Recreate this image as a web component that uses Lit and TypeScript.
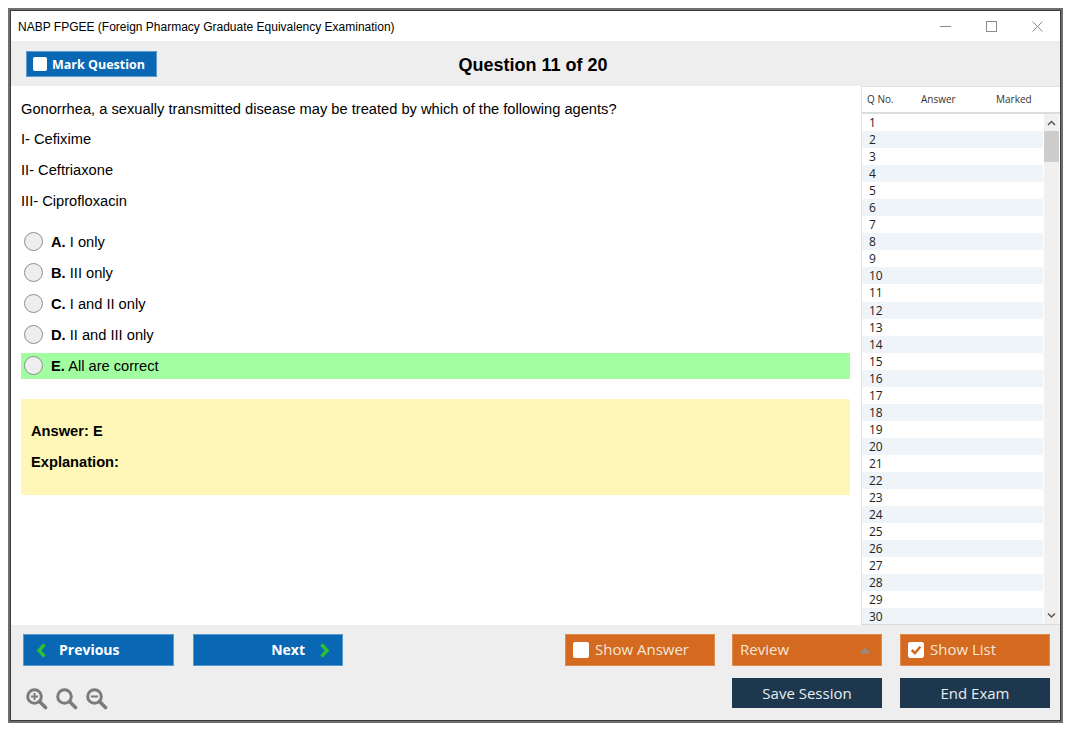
import { LitElement, html, css, svg } from "lit";
import { customElement } from "lit/decorators.js";

@customElement("app-root")
export class AppRoot extends LitElement {
  static styles = css`
    :host { display: block; padding: 8px 12px 0 8px; width: 1055px; font-family: "Liberation Sans", Arial, sans-serif; color: #000; }
    .win { width: 1055px; height: 715px; box-sizing: border-box; border: 2px solid #6f6f6f; background: #fff; display: flex; flex-direction: column; box-shadow: inset 0 0 0 1px #3a3a3a; padding: 1px; }
    .title { height: 30px; flex: none; display: flex; align-items: center; padding-left: 7px; font-size: 12px; }
    .title span { flex: 1; padding-top: 1px; }
    .ctl { width: 46px; height: 29px; display: flex; align-items: center; justify-content: center; }
    .ctl svg { display: block; }
    .tool { height: 45px; flex: none; background: #eeeeee; display: flex; align-items: center; padding-left: 15px; position: relative; }
    .mark { width: 131px; height: 26px; box-sizing: border-box; background: #0a67b3; border: 1px solid #5b9bd0; color: #fff; display: flex; align-items: center; padding-left: 6px; gap: 5px; font: 700 12.5px "Open Sans", sans-serif; }
    .mark span { padding-top: 1px; }
    .box { width: 14px; height: 14px; background: #fff; border-radius: 2px; flex: none; display: block; }
    .qtitle { position: absolute; left: 0; right: 5px; top: 14px; text-align: center; font-size: 18px; line-height: 20px; font-weight: 700; pointer-events: none; }
    .main { flex: 1; display: flex; min-height: 0; }
    .content { width: 850px; box-sizing: border-box; padding: 13px 11px 0 10px; font-size: 14.67px; flex: none; }
    .line { height: 31px; line-height: 20px; box-sizing: border-box; }
    .line.first { height: 30px; }
    .opts { margin-top: 7px; }
    .opt { height: 26px; margin-bottom: 5px; display: flex; align-items: center; padding-left: 3px; gap: 8px; }
    .opt.ok { background: #a1ffa1; }
    .radio { width: 17px; height: 17px; border-radius: 50%; background: #eeeeee; border: 1px solid #8e8e8e; flex: none; margin-top: -1px; }
    .ans { margin-top: 20px; height: 96px; box-sizing: border-box; background: #fef7b8; padding: 22px 10px 0; font-weight: 700; }
    .list { flex: 1; display: flex; flex-direction: column; overflow: hidden; border-left: 1px solid #e2e2e2; border-top: 1px solid #e2e2e2; border-bottom: 1px solid #dcdcdc; font-family: "Open Sans", sans-serif; min-width: 0; }
    .head { flex: none; border-bottom: 2px solid #dcdcdc; display: grid; grid-template-columns: 54px 75px 1fr; align-items: center; padding: 0 0 2px 5px; box-sizing: content-box; height: 23px; font-size: 10px; color: #333; }
    .lbody { flex: 1; display: flex; min-height: 0; overflow: hidden; }
    .rows { width: 181px; flex: none; }
    .row { height: 17.05px; padding-left: 7px; font-size: 12px; line-height: 18px; color: #222; letter-spacing: -0.2px; }
    .row.alt { background: #eff4f9; }
    .sb { width: 15px; margin: 0 1px; background: #f0f0f0; display: flex; flex-direction: column; align-items: center; }
    .sb svg { display: block; flex: none; }
    .thumb { width: 15px; height: 31px; background: #cdcdcd; flex: none; }
    .grow { flex: 1; }
    .foot { height: 95px; flex: none; background: #eeeeee; box-sizing: border-box; padding: 9px 10px 0 12px; display: flex; flex-direction: column; gap: 12px; }
    .frow { display: flex; }
    .frow.low { height: 30px; }
    .sp { flex: 1; }
    .g19 { width: 19px; }
    .g17 { width: 17px; }
    .g18 { width: 18px; }
    .btn { width: 150px; height: 32px; box-sizing: border-box; display: flex; align-items: center; color: #fff; font-family: "Open Sans", sans-serif; font-size: 15px; flex: none; }
    .btn span { margin-top: -2px; }
    .blue { width: 150.5px; background: #0a67b3; border: 1px solid #5b9bd0; font-weight: 700; font-size: 14px; padding: 0 12px; gap: 12px; }
    .next { justify-content: flex-end; gap: 14px; }
    .or { background: #d46a1f; border: 1px solid #e08a4e; color: #f5e6da; padding-left: 7px; gap: 6px; }
    .or .box, .or .chk { width: 16px; height: 16px; flex: none; }
    .orr { justify-content: space-between; padding-right: 10px; }
    .navy { height: 30px; background: #1d384e; color: #e8edf1; justify-content: center; }
    .navy span { margin-top: -1px; }
    .zoom { display: flex; gap: 8px; align-items: flex-start; padding: 10px 0 0 3px; height: 22px; }
    .zoom svg { display: block; }
  `;

  private mag(kind: string) {
    return html`<svg width="22" height="22" viewBox="0 0 22 22" fill="none" stroke="#7b7b7b">
      <circle cx="8.5" cy="8.5" r="6.8" stroke-width="3"></circle>
      <path d="M13.5 13.5 L19.5 19.5" stroke-width="3.6" stroke-linecap="round"></path>
      ${kind !== "o" ? svg`<path d="M5 8.5 H12" stroke-width="2"></path>` : ""}
      ${kind === "+" ? svg`<path d="M8.5 5 V12" stroke-width="2"></path>` : ""}
    </svg>`;
  }

  render() {
    const rows = Array.from({ length: 30 }, (_, i) => i + 1);
    const opts: [string, string][] = [["A.", "I only"], ["B.", "III only"], ["C.", "I and II only"], ["D.", "II and III only"], ["E.", "All are correct"]];
    return html`<div class="win">
      <div class="title"><span>NABP FPGEE (Foreign Pharmacy Graduate Equivalency Examination)</span>
        <div class="ctl"><svg width="11" height="11" viewBox="0 0 11 11"><path d="M0 5.5H11" stroke="#8a8a8a"></path></svg></div>
        <div class="ctl"><svg width="11" height="11" viewBox="0 0 11 11"><rect x=".5" y=".5" width="10" height="10" fill="none" stroke="#8a8a8a"></rect></svg></div>
        <div class="ctl"><svg width="11" height="11" viewBox="0 0 11 11"><path d="M.5 .5L10.5 10.5M10.5 .5L.5 10.5" stroke="#8a8a8a"></path></svg></div>
      </div>
      <div class="tool">
        <div class="mark"><i class="box"></i><span>Mark Question</span></div>
        <div class="qtitle">Question 11 of 20</div>
      </div>
      <div class="main">
        <div class="content">
          <div class="line first">Gonorrhea, a sexually transmitted disease may be treated by which of the following agents?</div>
          <div class="line">I- Cefixime</div>
          <div class="line">II- Ceftriaxone</div>
          <div class="line">III- Ciprofloxacin</div>
          <div class="opts">
            ${opts.map(([k, t], i) => html`<div class="opt ${i === 4 ? "ok" : ""}"><i class="radio"></i><span><b>${k}</b> ${t}</span></div>`)}
          </div>
          <div class="ans"><div class="line">Answer: E</div><div class="line">Explanation:</div></div>
        </div>
        <div class="list">
          <div class="head"><span>Q No.</span><span>Answer</span><span>Marked</span></div>
          <div class="lbody">
            <div class="rows">${rows.map((n) => html`<div class="row ${n % 2 === 0 ? "alt" : ""}">${n}</div>`)}</div>
            <div class="sb">
              <svg width="15" height="17" viewBox="0 0 15 17"><path d="M4 11L7.5 7.5L11 11" fill="none" stroke="#555" stroke-width="1.5"></path></svg>
              <div class="thumb"></div><div class="grow"></div>
              <svg width="15" height="17" viewBox="0 0 15 17"><path d="M4 6.5L7.5 10L11 6.5" fill="none" stroke="#555" stroke-width="1.5"></path></svg>
            </div>
          </div>
        </div>
      </div>
      <div class="foot">
        <div class="frow">
          <div class="btn blue"><svg width="11" height="15" viewBox="0 0 11 15"><path d="M8.5 1.5L3 7.5L8.5 13.5" fill="none" stroke="#2ec02e" stroke-width="3.4"></path></svg><span>Previous</span></div>
          <div class="g19"></div>
          <div class="btn blue next"><span>Next</span><svg width="11" height="15" viewBox="0 0 11 15"><path d="M2.5 1.5L8 7.5L2.5 13.5" fill="none" stroke="#2ec02e" stroke-width="3.4"></path></svg></div>
          <div class="sp"></div>
          <div class="btn or"><i class="box"></i><span>Show Answer</span></div>
          <div class="g17"></div>
          <div class="btn or orr"><span>Review</span><svg width="12" height="7" viewBox="0 0 12 7"><path d="M0 6.5L6 .5L12 6.5Z" fill="#9a8a7c"></path></svg></div>
          <div class="g18"></div>
          <div class="btn or">
            <svg class="chk" viewBox="0 0 15 15"><rect width="15" height="15" rx="2" fill="#fff"></rect><path d="M3.5 7.5L6.5 10.5L11.5 4.5" fill="none" stroke="#d46a1f" stroke-width="2.4"></path></svg><span>Show List</span></div>
        </div>
        <div class="frow low">
          <div class="zoom">${this.mag("+")}${this.mag("o")}${this.mag("-")}</div>
          <div class="sp"></div>
          <div class="btn navy"><span>Save Session</span></div>
          <div class="g18"></div>
          <div class="btn navy"><span>End Exam</span></div>
        </div>
      </div>
    </div>`;
  }
}
